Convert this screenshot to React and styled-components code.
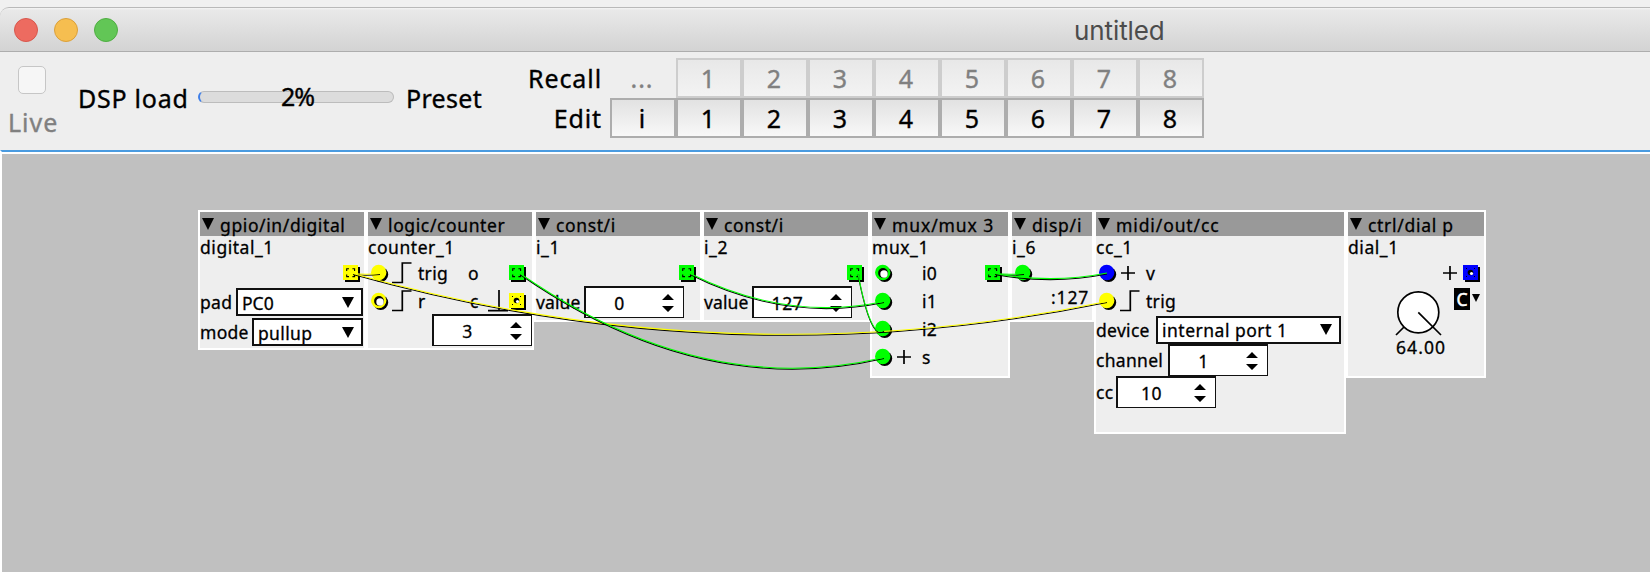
import React from 'react';
import styled, { createGlobalStyle } from 'styled-components';

const Global = createGlobalStyle`
  *, *::before, *::after { box-sizing: border-box; }
  body { margin: 0; overflow: hidden; background: #efefef; font-family: "Noto Sans", sans-serif; color: #000; }
`;

const Window = styled.div`
  display: flex;
  flex-direction: column;
  width: 1650px;
  height: 572px;
  padding-top: 7px;
  overflow: hidden;
  background: #f0f0f0;
`;

const TitleBar = styled.header`
  display: flex;
  align-items: center;
  flex: none;
  height: 45px;
  padding-left: 14px;
  gap: 16px;
  border-top: 1px solid #b9b9b9;
  border-bottom: 1px solid #adadad;
  border-top-left-radius: 9px;
  background: linear-gradient(#f4f4f4 0, #e9e9e9 2px, #d3d3d3 100%);
`;

const Light = styled.span`
  width: 24px;
  height: 24px;
  border-radius: 50%;
  border: 1px solid ${(p) => p.$edge};
  background: ${(p) => p.$fill};
`;

const Title = styled.h1`
  margin: 2px 0 0 940px;
  font: 400 26px/30px Inter, sans-serif;
  letter-spacing: -0.1px;
  color: #4c4c4c;
`;

const Toolbar = styled.div`
  display: flex;
  flex: none;
  height: 98px;
  background: #eeeeee;
  font-size: 25px;
  line-height: 34px;
  white-space: nowrap;
  -webkit-text-stroke: 0.35px;
`;

const LiveBox = styled.label`
  width: 78px;
  padding: 14px 0 0 8px;
  color: #808080;
  letter-spacing: 1px;
`;

const Check = styled.span`
  display: block;
  width: 28px;
  height: 28px;
  margin: 0 0 11px 10px;
  border: 1px solid #c6c6c6;
  border-radius: 5px;
  background: #f6f6f6;
`;

const ToolText = styled.span`
  width: ${(p) => p.$w}px;
  padding-top: 29px;
  letter-spacing: ${(p) => p.$ls || 0}px;
`;

const Progress = styled.div`
  display: flex;
  align-items: center;
  justify-content: center;
  width: 196px;
  height: 12px;
  margin: 39px 12px 0 0;
  padding: 0 0 3px 2px;
  border: 1px solid #bcbcbc;
  border-left: 2px solid #3f7fe8;
  border-radius: 6px;
  background: #dcdcdc;
  letter-spacing: -1px;
`;

const PresetGrid = styled.div`
  display: grid;
  grid-template-columns: 112px repeat(9, 66px);
  grid-auto-rows: 40px;
  padding: 6px 0 0 1px;
`;

const PresetLabel = styled.span`
  padding: 3px 8px 0 0;
  text-align: right;
  letter-spacing: 0.9px;
`;

const Cell = styled.button`
  padding: 0 2px 0 0;
  font: inherit;
  text-align: center;
  -webkit-text-stroke: inherit;
  color: ${(p) => (p.$dim ? '#808080' : '#000')};
  border: 2px solid ${(p) => (p.$flat ? 'transparent' : p.$dim ? '#cdcdcd' : '#adadad')};
  background: ${(p) =>
    p.$flat ? 'none' : p.$dim ? 'linear-gradient(#e8e8e8, #f3f3f3)' : 'linear-gradient(#e2e2e2, #f8f8f8)'};
  letter-spacing: ${(p) => (p.$flat ? 1 : 0)}px;
`;

const Canvas = styled.main`
  display: flex;
  align-items: flex-start;
  position: relative;
  flex: 1;
  padding: 56px 0 0 196px;
  border-top: 2px solid #4a9be0;
  border-left: 2px solid #fff;
  background: #c0c0c0;
  box-shadow: inset 0 2px #fff;
`;

const Node = styled.section`
  flex: none;
  width: ${(p) => p.$w}px;
  height: ${(p) => p.$h}px;
  margin-top: 2px;
  border: 2px solid #fff;
  background: #eeeeee;
  font-size: 17.5px;
  line-height: 24px;
  white-space: nowrap;
  -webkit-text-stroke: 0.3px;
`;

const NodeHead = styled.div`
  display: flex;
  align-items: center;
  height: 24px;
  padding: 2px 0 0 2px;
  gap: 6px;
  background: #999999;
  letter-spacing: ${(p) => p.$ls ?? 0.62}px;
`;

const NodeName = styled.div`
  height: 23px;
  line-height: 22px;
  letter-spacing: 0.55px;
`;

const Row = styled.div`
  display: flex;
  align-items: center;
  height: ${(p) => p.$h || 28}px;
  padding: 0 ${(p) => p.$r || 0}px 0 ${(p) => p.$l || 0}px;
`;

const Label = styled.span`
  margin-left: ${(p) => p.$ml || 0}px;
  width: ${(p) => (p.$w ? p.$w + 'px' : 'auto')};
  letter-spacing: ${(p) => p.$ls ?? 0.3}px;
  flex: none;
`;

const Spacer = styled.span`
  flex: ${(p) => (p.$w ? `0 0 ${p.$w}px` : '1')};
`;

const Svg = styled.svg`
  display: block;
  flex: none;
  overflow: visible;
  margin-left: ${(p) => p.$ml || 0}px;
  margin-top: ${(p) => p.$mt || 0}px;
`;

const ComboBox = styled.div`
  display: flex;
  align-items: center;
  justify-content: space-between;
  flex: none;
  width: ${(p) => p.$w}px;
  height: 28px;
  padding: 1px 7px 0 4px;
  border: 2px solid #111;
  background: #fff;
  letter-spacing: ${(p) => p.$ls ?? 0.35}px;
`;

const SpinBox = styled.div`
  display: flex;
  align-items: center;
  flex: none;
  width: 100px;
  height: 32px;
  margin-left: ${(p) => p.$ml || 0}px;
  border: solid #111;
  border-width: 2px 1px 1px 2px;
  background: #fff;
`;

const SpinValue = styled.span`
  width: 67px;
  text-align: center;
  letter-spacing: 0.6px;
`;

const DialBody = styled.div`
  display: flex;
  height: 48px;
  padding-left: 48px;
`;

const DialMenu = styled.span`
  display: flex;
  align-items: center;
  justify-content: center;
  width: 16px;
  height: 22px;
  margin: 1px 2px 0 13px;
  background: #000;
  color: #fff;
  -webkit-text-stroke: 0.5px;
`;

const Wires = styled.svg`
  position: absolute;
  left: -2px;
  top: -2px;
  pointer-events: none;
`;

const Down = ({ h = 12, mt = -1 }) => (
  <Svg width="12" height={h} $mt={mt} viewBox="0 0 12 12" preserveAspectRatio="none">
    <path d="M0 0H12L6 12Z" />
  </Svg>
);

const colors = { y: '#ffff00', g: '#00ff00', b: '#0000ff' };

const Inlet = ({ c, open }) => (
  <Svg width="15" height="15" $ml={3} $mt={-1}>
    <circle cx="9.7" cy="9.5" r="7.5" />
    <circle cx="7.7" cy="7.5" r="7.7" fill={colors[c]} />
    {open && <circle cx="8" cy="8" r="4.9" />}
    {open && <circle cx="9" cy="9" r="3.7" fill="#fff" />}
  </Svg>
);

const Outlet = ({ c, open }) => (
  <Svg width="15" height="15" $mt={-1}>
    <rect x="2" y="2" width="15" height="15" />
    <rect width="15" height="15" fill={colors[c]} />
    {open ? (
      <>
        <circle cx="7.5" cy="7.5" r="2.8" />
        <circle cx="8.5" cy="8.5" r="1.6" fill="#fff" />
        <path d="M3 3h1v1h-1zM11 3h1v1h-1zM3 11h1v1h-1zM11 11h1v1h-1z" />
      </>
    ) : (
      <path d="M3.7 6V3.7H6M9.4 3.7H11.6V6M11.6 9.4V11.6H9.4M6 11.6H3.7V9.4" fill="none" stroke="#000" strokeWidth="1.1" />
    )}
  </Svg>
);

const Rise = () => (
  <Svg width="20" height="20" $ml={6} $mt={-1}>
    <path d="M0 19.5H10.3V0H19.5" fill="none" stroke="#000" strokeWidth="1.7" />
  </Svg>
);

const Plus = ({ ml = 0 }) => (
  <Svg width="14" height="14" $ml={ml} $mt={-1}>
    <path d="M0 7H14M7 0V14" fill="none" stroke="#000" strokeWidth="1.7" />
  </Svg>
);

const Base = () => (
  <Svg width="20" height="20" $mt={-1}>
    <path d="M-1 19.7H19M10 -1V19.7" fill="none" stroke="#000" strokeWidth="1.7" />
  </Svg>
);

const Spinner = ({ value, ml }) => (
  <SpinBox $ml={ml}>
    <SpinValue>{value}</SpinValue>
    <Svg width="12" height="18" $ml={9} $mt={1}>
      <path d="M0 6L6 0L12 6ZM0 12H12L6 18Z" />
    </Svg>
  </SpinBox>
);

const Combo = ({ value, w, ls }) => (
  <ComboBox $w={w} $ls={ls}>
    {value}
    <Down h={11} />
  </ComboBox>
);

const Module = ({ type, name, w, h, ls, children }) => (
  <Node $w={w} $h={h}>
    <NodeHead $ls={ls}>
      <Down mt={-3} />
      {type}
    </NodeHead>
    <NodeName>{name}</NodeName>
    {children}
  </Node>
);

const ConstModule = ({ name, value }) => (
  <Module type="const/i" name={name} w={168} h={112}>
    <Row $r={6}>
      <Spacer />
      <Outlet c="g" />
    </Row>
    <Row $h={30}>
      <Label $w={48} $ls={0.1}>value</Label>
      <Spinner value={value} />
    </Row>
  </Module>
);

const wires = [
  ['y', 'M353 273.5Q366 275 380 273.5'],
  ['y', 'M353 273.5Q730 379 1107 301.5'],
  ['g', 'M520 273.5Q702 400 884 357.5'],
  ['g', 'M690 273.5Q787 322 884 301.5'],
  ['g', 'M858 273.5Q871 341 884 330'],
  ['g', 'M995 273.5Q1010 275 1024 273.5'],
  ['g', 'M995 273.5Q1052 284 1107 273'],
];

const slots = [1, 2, 3, 4, 5, 6, 7, 8];

export default function App() {
  return (
    <Window>
      <Global />
      <TitleBar>
        <Light $fill="#ed6b60" $edge="#d8574d" />
        <Light $fill="#f6be50" $edge="#dba03a" />
        <Light $fill="#62c656" $edge="#4fae42" />
        <Title>untitled</Title>
      </TitleBar>
      <Toolbar>
        <LiveBox>
          <Check />
          Live
        </LiveBox>
        <ToolText $w={120} $ls={0.75}>DSP load</ToolText>
        <Progress>2%</Progress>
        <ToolText $w={91} $ls={0.3}>Preset</ToolText>
        <PresetGrid>
          <PresetLabel>Recall</PresetLabel>
          <Cell $dim $flat>...</Cell>
          {slots.map((n) => (
            <Cell key={n} $dim>{n}</Cell>
          ))}
          <PresetLabel>Edit</PresetLabel>
          <Cell>i</Cell>
          {slots.map((n) => (
            <Cell key={n}>{n}</Cell>
          ))}
        </PresetGrid>
      </Toolbar>
      <Canvas>
        <Module type="gpio/in/digital" name="digital_1" w={168} h={140}>
          <Row $r={6}>
            <Spacer />
            <Outlet c="y" />
          </Row>
          <Row $h={30}>
            <Label $w={36}>pad</Label>
            <Combo value="PC0" w={127} ls={0} />
          </Row>
          <Row $h={30}>
            <Label $w={52}>mode</Label>
            <Combo value="pullup" w={111} />
          </Row>
        </Module>
        <Module type="logic/counter" name="counter_1" w={168} h={140}>
          <Row $r={8}>
            <Inlet c="y" />
            <Rise />
            <Label $ml={6}>trig</Label>
            <Spacer />
            <Label $w={41}>o</Label>
            <Outlet c="g" />
          </Row>
          <Row $r={8}>
            <Inlet c="y" open />
            <Rise />
            <Label $ml={6}>r</Label>
            <Spacer />
            <Label $w={19}>c</Label>
            <Base />
            <Outlet c="y" open />
          </Row>
          <Row $h={30}>
            <Spinner value="3" ml={64} />
          </Row>
        </Module>
        <ConstModule name="i_1" value="0" />
        <ConstModule name="i_2" value="127" />
        <Module type="mux/mux 3" name="mux_1" w={140} h={168} ls={0.9}>
          <Row $r={8}>
            <Inlet c="g" open />
            <Label $ml={32}>i0</Label>
            <Spacer />
            <Outlet c="g" />
          </Row>
          <Row>
            <Inlet c="g" />
            <Label $ml={32}>i1</Label>
          </Row>
          <Row>
            <Inlet c="g" />
            <Label $ml={32}>i2</Label>
          </Row>
          <Row>
            <Inlet c="g" />
            <Plus ml={7} />
            <Label $ml={11}>s</Label>
          </Row>
        </Module>
        <Module type="disp/i" name="i_6" w={84} h={112} ls={0.8}>
          <Row>
            <Inlet c="g" />
          </Row>
          <Row $h={20} $r={3}>
            <Spacer />
            <Label $ls={0.8}>:127</Label>
          </Row>
        </Module>
        <Module type="midi/out/cc" name="cc_1" w={252} h={224} ls={0.9}>
          <Row>
            <Inlet c="b" />
            <Plus ml={7} />
            <Label $ml={11}>v</Label>
          </Row>
          <Row>
            <Inlet c="y" />
            <Rise />
            <Label $ml={6}>trig</Label>
          </Row>
          <Row $h={29}>
            <Label $w={60}>device</Label>
            <Combo value="internal port 1" w={185} ls={0.5} />
          </Row>
          <Row $h={32}>
            <Label $w={72}>channel</Label>
            <Spinner value="1" />
          </Row>
          <Row $h={32}>
            <Label $w={20}>cc</Label>
            <Spinner value="10" />
          </Row>
        </Module>
        <Module type="ctrl/dial p" name="dial_1" w={140} h={168} ls={0.7}>
          <Row $r={6}>
            <Spacer />
            <Plus />
            <Spacer $w={6} />
            <Outlet c="b" open />
          </Row>
          <DialBody>
            <Svg width="45" height="48">
              <circle cx="22.3" cy="25.3" r="20.5" fill="#fff" stroke="#000" strokeWidth="1.7" />
              <path d="M0 48L8 40M22.3 25.3L45 48" fill="none" stroke="#000" strokeWidth="1.7" />
            </Svg>
            <DialMenu>C</DialMenu>
            <Svg width="8" height="8" $mt={7}>
              <path d="M0 0H8L4 8Z" />
            </Svg>
          </DialBody>
          <Row $h={24} $l={48}>
            <Label $ls={1.1}>64.00</Label>
          </Row>
        </Module>
        <Wires width="1650" height="422" viewBox="0 150 1650 422">
          {wires.map(([c, d]) => (
            <g key={d} fill="none" strokeWidth="1.1">
              <path d={d} stroke="#000" transform="translate(0 1)" />
              <path d={d} stroke={colors[c]} />
            </g>
          ))}
        </Wires>
      </Canvas>
    </Window>
  );
}
